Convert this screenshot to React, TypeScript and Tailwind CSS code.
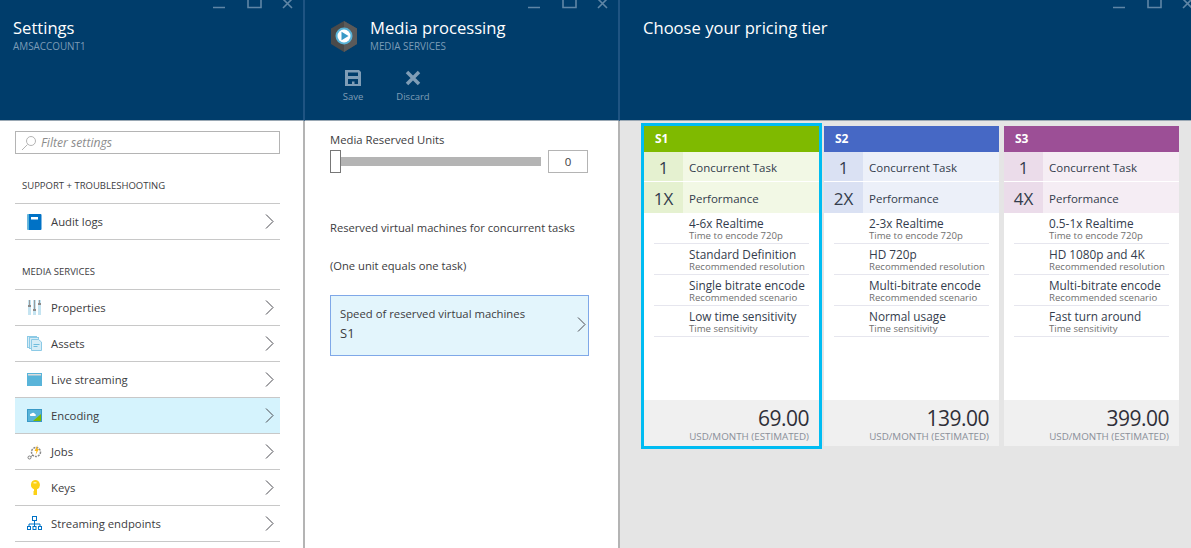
import type { ReactNode } from 'react'

const font = { fontFamily: '"Open Sans", "Noto Sans", sans-serif' }

function Chevron() {
  return (
    <svg width="9" height="15" viewBox="0 0 9 15" fill="none" stroke="#4a4a50" className="shrink-0">
      <path d="M1 0.500l7 7-7 7" />
    </svg>
  )
}

function WindowControls({ offset }: { offset: string }) {
  return (
    <div className={`absolute top-0 flex items-start ${offset}`}>
      <svg width="82" height="10" viewBox="0 0 82 10" fill="none" stroke="#5f86a6">
        <path d="M0 7.500h12" strokeWidth="1.500" />
        <path d="M35 -2h13v9.500H35z" strokeWidth="1.600" />
        <path d="M70 -1l9 9M79 -1l-9 9" strokeWidth="1.600" />
      </svg>
    </div>
  )
}

function AuditIcon() {
  return (
    <svg width="15" height="16" viewBox="0 0 15 16">
      <rect x="0.500" y="0" width="14" height="16" rx="1" fill="#0072c6" />
      <rect x="0.500" y="0" width="1.500" height="16" fill="#59b4d9" />
      <rect x="4" y="3" width="7" height="2.500" fill="#ffffff" />
    </svg>
  )
}

function PropertiesIcon() {
  return (
    <svg width="15" height="15" viewBox="0 0 15 15">
      <rect x="1" y="0" width="3" height="15" fill="#c5e4f1" />
      <rect x="6" y="0" width="3" height="15" fill="#c5e4f1" />
      <rect x="11" y="0" width="3" height="15" fill="#c5e4f1" />
      <path d="M2.500 0v5M7.500 0v9M12.500 0v3" stroke="#9a9a9a" />
      <rect x="1" y="5" width="3" height="2" fill="#8a8a8a" />
      <rect x="6" y="9" width="3" height="2" fill="#8a8a8a" />
      <rect x="11" y="3" width="3" height="2" fill="#8a8a8a" />
    </svg>
  )
}

function AssetsIcon() {
  return (
    <svg width="15" height="15" viewBox="0 0 15 15">
      <rect x="0.500" y="0.500" width="9" height="11" fill="#d5ecf6" stroke="#8ccae6" />
      <rect x="2.500" y="1.500" width="9" height="11" fill="#d5ecf6" stroke="#8ccae6" />
      <path d="M4.500 3.500h7l3 2.500v8.500h-10z" fill="#d5ecf6" stroke="#8ccae6" />
      <path d="M6.500 8.500h6M6.500 10.500h4" stroke="#6fbcdd" />
    </svg>
  )
}

function LiveIcon() {
  return (
    <svg width="15" height="13" viewBox="0 0 15 13">
      <rect width="15" height="13" fill="#59b4d9" />
      <rect x="1" y="1" width="13" height="1.500" fill="#dcdcdc" />
    </svg>
  )
}

function EncodingIcon() {
  return (
    <svg width="15" height="13" viewBox="0 0 15 13">
      <rect width="15" height="13" fill="#3999c6" />
      <rect x="1" y="1" width="13" height="11" fill="#59b4d9" />
      <path d="M3 6.500a1.500 1.500 0 0 1 1.500-2 2 2 0 0 1 3.500.5 1.200 1.200 0 0 1 .5 2H3.500z" fill="#ffffff" />
      <path d="M6 12l8-7v7z" fill="#7fba00" />
    </svg>
  )
}

function JobsIcon() {
  return (
    <svg width="15" height="16" viewBox="0 0 15 16" fill="none">
      <circle cx="9" cy="8" r="4.500" stroke="#8a8a8a" strokeWidth="1.500" strokeDasharray="2 1" />
      <path d="M10.500 1L7.500 7h2l-1 4 3.500-6h-2z" fill="#fcb714" />
      <circle cx="2.500" cy="13.500" r="1.500" stroke="#7a7a7a" />
      <path d="M4 12.500l2-1.500" stroke="#7a7a7a" />
    </svg>
  )
}

function KeyIcon() {
  return (
    <svg width="10" height="15" viewBox="0 0 10 15">
      <path d="M5 0a4.800 4.800 0 0 1 2 9.200V15H4l-1-1 1-1-1-1 1-1V9.200A4.800 4.800 0 0 1 5 0z" fill="#fcd116" />
      <rect x="3.500" y="2" width="3" height="1.500" fill="#fff3a8" />
    </svg>
  )
}

function EndpointsIcon() {
  return (
    <svg width="15" height="15" viewBox="0 0 15 15" fill="none" stroke="#0072c6">
      <rect x="5.500" y="0.500" width="4" height="4" />
      <path d="M7.500 4.500v6M2 10.500V8h11v2.500" />
      <rect x="0.500" y="10.500" width="3" height="3" />
      <rect x="6" y="10.500" width="3" height="3" />
      <rect x="11.500" y="10.500" width="3" height="3" />
    </svg>
  )
}

function NavRow({ icon, label, active }: { icon: ReactNode; label: string; active?: boolean }) {
  return (
    <div className={`flex h-[36px] items-center border-b border-[#c8c8c8] pr-[6px] ${active ? 'bg-[#d5f3fd]' : ''}`}>
      <div className="flex w-[36px] shrink-0 items-center justify-center pl-[3px]">{icon}</div>
      <span className="flex-1 pt-[2px] text-[11.300px] text-[#3c3c41]">{label}</span>
      <Chevron />
    </div>
  )
}

type Tier = {
  name: string
  head: string
  numBg: string
  rowBg: string
  perf: string
  price: string
  features: [string, string][]
}

const tiers: Tier[] = [
  {
    name: 'S1',
    head: 'bg-[#7fba00]',
    numBg: 'bg-[#e5f1d0]',
    rowBg: 'bg-[#f2f8e5]',
    perf: '1X',
    price: '69.00',
    features: [
      ['4-6x Realtime', 'Time to encode 720p'],
      ['Standard Definition', 'Recommended resolution'],
      ['Single bitrate encode', 'Recommended scenario'],
      ['Low time sensitivity', 'Time sensitivity'],
    ],
  },
  {
    name: 'S2',
    head: 'bg-[#4668c5]',
    numBg: 'bg-[#dae1f3]',
    rowBg: 'bg-[#ecf0f9]',
    perf: '2X',
    price: '139.00',
    features: [
      ['2-3x Realtime', 'Time to encode 720p'],
      ['HD 720p', 'Recommended resolution'],
      ['Multi-bitrate encode', 'Recommended scenario'],
      ['Normal usage', 'Time sensitivity'],
    ],
  },
  {
    name: 'S3',
    head: 'bg-[#9c4f96]',
    numBg: 'bg-[#ebdcea]',
    rowBg: 'bg-[#f5edf4]',
    perf: '4X',
    price: '399.00',
    features: [
      ['0.5-1x Realtime', 'Time to encode 720p'],
      ['HD 1080p and 4K', 'Recommended resolution'],
      ['Multi-bitrate encode', 'Recommended scenario'],
      ['Fast turn around', 'Time sensitivity'],
    ],
  },
]

function TierCard({ tier, selected }: { tier: Tier; selected?: boolean }) {
  return (
    <div className={selected ? 'w-[181px] border-[3px] border-[#00bcf2]' : 'mt-[3px] h-[320px] w-[175px]'}>
      <div className="flex h-[320px] flex-col bg-white">
        <div className={`flex h-[26px] items-center pl-[11px] text-[12px] font-bold text-white ${tier.head}`}>{tier.name}</div>
        <div className={`flex h-[30px] items-center border-b border-white ${tier.rowBg}`}>
          <div className={`flex h-full w-[39px] items-center justify-center pt-[2px] text-[17px] text-[#333c4c] ${tier.numBg}`}>1</div>
          <span className="pl-[6px] pt-[2px] text-[11.500px] text-[#333c4c]">Concurrent Task</span>
        </div>
        <div className={`flex h-[31px] items-center ${tier.rowBg}`}>
          <div className={`flex h-full w-[39px] items-center justify-center pt-[2px] text-[17px] text-[#333c4c] ${tier.numBg}`}>{tier.perf}</div>
          <span className="pl-[6px] pt-[2px] text-[11.500px] text-[#333c4c]">Performance</span>
        </div>
        <div className="flex-1 px-[10px]">
          {tier.features.map(([title, sub]) => (
            <div key={title} className="h-[31px] border-b border-[#e6e6ee] pl-[35px] pt-[4px]">
              <div className="text-[11.800px] leading-[13px] text-[#333c4c]">{title}</div>
              <div className="text-[9.600px] leading-[11px] text-[#707070]">{sub}</div>
            </div>
          ))}
        </div>
        <div className="flex h-[46px] flex-col items-end bg-[#f0f0f0] px-[10px] pt-[5px]">
          <div className="text-[21px] leading-[26px] tracking-[-0.5px] text-[#2f2f38]">{tier.price}</div>
          <div className="text-[9.800px] leading-[11px] text-[#8a8f99]">USD/MONTH (ESTIMATED)</div>
        </div>
      </div>
    </div>
  )
}

export default function App() {
  return (
    <div className="flex h-[548px] w-[1191px] overflow-hidden bg-white" style={font}>
      {/* Settings blade */}
      <section className="flex w-[305px] shrink-0 flex-col">
        <header className="relative h-[121px] shrink-0 border-b border-r-[2px] border-b-[#9aa8b4] border-r-[#1f5482] bg-[#003d6b] pl-[13px] pt-[16px]">
          <h1 className="text-[16.600px] leading-[24px] text-white">Settings</h1>
          <p className="text-[9.900px] leading-[12px] text-[#7c9cb7]">AMSACCOUNT1</p>
          <WindowControls offset="left-[213px]" />
        </header>
        <div className="flex-1 border-r-[2px] border-[#b4b4b4] px-[15px] pr-[23px] pt-[10px]">
          <div className="flex h-[23px] items-center gap-[4px] border border-[#b4b4b4] pl-[5px]">
            <svg width="16" height="16" viewBox="0 0 16 16" fill="none" stroke="#b4b4b4">
              <circle cx="10" cy="6" r="4.500" />
              <path d="M6.500 9.500L1 15" />
            </svg>
            <span className="pt-[2px] text-[12.200px] italic text-[#8c8c8c]">Filter settings</span>
          </div>
          <div className="mt-[23px] h-[18px] pl-[7px] text-[9.500px] leading-[18px] text-[#3c3c41]">SUPPORT + TROUBLESHOOTING</div>
          <div className="mt-[8px] border-t border-[#c8c8c8]">
            <NavRow icon={<AuditIcon />} label="Audit logs" />
          </div>
          <div className="mt-[23px] h-[18px] pl-[7px] text-[9.500px] leading-[18px] text-[#3c3c41]">MEDIA SERVICES</div>
          <div className="mt-[8px] border-t border-[#c8c8c8]">
            <NavRow icon={<PropertiesIcon />} label="Properties" />
            <NavRow icon={<AssetsIcon />} label="Assets" />
            <NavRow icon={<LiveIcon />} label="Live streaming" />
            <NavRow icon={<EncodingIcon />} label="Encoding" active />
            <NavRow icon={<JobsIcon />} label="Jobs" />
            <NavRow icon={<KeyIcon />} label="Keys" />
            <NavRow icon={<EndpointsIcon />} label="Streaming endpoints" />
          </div>
        </div>
      </section>

      {/* Media processing blade */}
      <section className="flex w-[315px] shrink-0 flex-col">
        <header className="relative h-[121px] shrink-0 border-b border-r-[2px] border-b-[#9aa8b4] border-r-[#1f5482] bg-[#003d6b]">
          <div className="flex items-start pl-[25px] pt-[16px]">
            <svg width="28" height="31" viewBox="0 0 28 31" className="mt-[5px]">
              <path d="M14 0l13 7.500v15.500L14 31 1 23V7.500z" fill="#4a4a4a" />
              <path d="M14 0l13 7.500v15.500L14 31z" fill="#5a5a5a" />
              <circle cx="14" cy="15" r="8.500" fill="#59b4d9" />
              <circle cx="14" cy="15" r="6.500" fill="#ffffff" />
              <path d="M11.500 10.800l7 4.200-7 4.200z" fill="#3999c6" />
            </svg>
            <div className="pl-[12px]">
              <h1 className="text-[16.600px] leading-[24px] text-white">Media processing</h1>
              <p className="text-[9.900px] leading-[12px] text-[#7c9cb7]">MEDIA SERVICES</p>
            </div>
          </div>
          <div className="mt-[18px] flex pl-[33px]">
            <div className="flex w-[30px] flex-col items-center">
              <svg width="16" height="16" viewBox="0 0 16 16" fill="#7f9db6" fillRule="evenodd">
                <path d="M0 0h14l2 2v14H0zM3 2.500V6h10V2.500zM3 9v5h10V9zM7 11.500h2.500V14H7z" />
              </svg>
              <span className="mt-[4px] text-[9.500px] leading-[13px] text-[#7f9db6]">Save</span>
            </div>
            <div className="ml-[28px] flex w-[34px] flex-col items-center">
              <svg width="16" height="16" viewBox="0 0 16 16" stroke="#7f9db6" strokeWidth="3.500">
                <path d="M2 2l12 12M14 2L2 14" />
              </svg>
              <span className="mt-[4px] text-[9.500px] leading-[13px] text-[#7f9db6]">Discard</span>
            </div>
          </div>
          <WindowControls offset="left-[223px]" />
        </header>
        <div className="flex-1 border-r-[2px] border-[#b4b4b4] pl-[25px] pr-[29px] pt-[11px]">
          <div className="text-[11.300px] leading-[16px] text-[#3c3c41]">Media Reserved Units</div>
          <div className="mt-[2px] flex items-center">
            <div className="h-[23px] w-[11px] shrink-0 border border-[#777777] bg-white" />
            <div className="h-[9px] w-[200px] bg-[#b4b4b4]" />
            <div className="ml-[7px] flex h-[23px] w-[40px] items-center justify-center border border-[#b4b4b4] text-[11.500px] text-[#3c3c41]">0</div>
          </div>
          <p className="mt-[47px] text-[11.200px] leading-[16px] text-[#3c3c41]">Reserved virtual machines for concurrent tasks</p>
          <p className="mt-[22px] text-[11.200px] leading-[16px] text-[#3c3c41]">(One unit equals one task)</p>
          <div className="mt-[21px] flex h-[61px] w-[259px] items-center border border-[#7fa8e8] bg-[#e3f5fc] pb-[3px] pl-[9px] pr-[2px]">
            <div className="flex-1 pb-[1px]">
              <div className="text-[11.300px] leading-[16px] text-[#3c3c41]">Speed of reserved virtual machines</div>
              <div className="mt-[2px] text-[13px] leading-[18px] text-[#3c3c41]">S1</div>
            </div>
            <Chevron />
          </div>
        </div>
      </section>

      {/* Pricing blade */}
      <section className="flex min-w-0 flex-1 flex-col bg-[#e5e5e5]">
        <header className="relative h-[121px] shrink-0 border-b border-[#9aa8b4] bg-[#003d6b] pl-[23px] pt-[16px]">
          <h1 className="text-[16.600px] leading-[24px] text-white">Choose your pricing tier</h1>
          <WindowControls offset="left-[493px]" />
        </header>
        <div className="flex items-start pl-[21px] pt-[2px]">
          <TierCard tier={tiers[0]} selected />
          <div className="ml-[2px]">
            <TierCard tier={tiers[1]} />
          </div>
          <div className="ml-[5px]">
            <TierCard tier={tiers[2]} />
          </div>
        </div>
      </section>
    </div>
  )
}
